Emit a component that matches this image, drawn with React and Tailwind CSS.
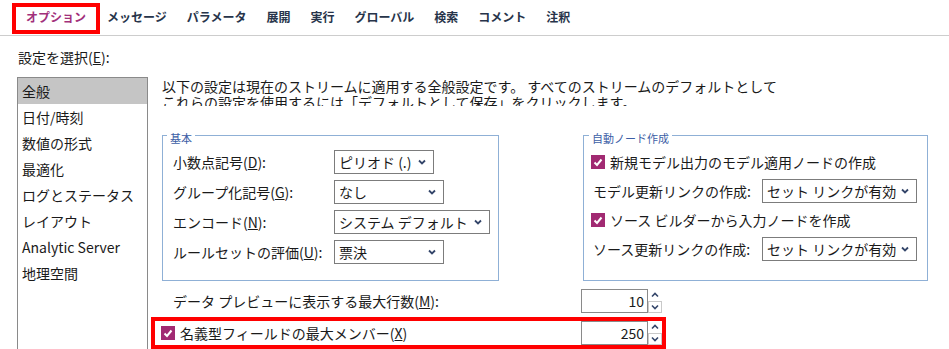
import React from "react";

const tabs = ["メッセージ", "パラメータ", "展開", "実行", "グローバル", "検索", "コメント", "注釈"];
const items = ["全般", "日付/時刻", "数値の形式", "最適化", "ログとステータス", "レイアウト", "Analytic Server", "地理空間"];

function Chevron() {
  return (
    <svg width="8" height="6" viewBox="0 0 8 6" className="shrink-0">
      <polyline points="1,1.5 4,4.5 7,1.5" fill="none" stroke="#34466a" strokeWidth="1.8" />
    </svg>
  );
}

function Select({ label, className }) {
  return (
    <div className={"flex items-center justify-between h-[24px] border border-[#7c7c7c] pl-[4px] pr-[7px] bg-white " + className}>
      <span className="text-[14px] leading-[16px] whitespace-nowrap">{label}</span>
      <Chevron />
    </div>
  );
}

function Check() {
  return (
    <div className="w-[14px] h-[14px] bg-[#a12a72] flex items-center justify-center shrink-0">
      <svg width="10" height="9" viewBox="0 0 10 9">
        <polyline points="1.5,4.5 4,7 8.5,1.5" fill="none" stroke="#fff" strokeWidth="2" />
      </svg>
    </div>
  );
}

function Spinner({ value }) {
  return (
    <div className="flex h-[24px] shrink-0">
      <div className="w-[67px] h-[24px] border border-[#8a8a8a] text-right pr-[3px] text-[14px] leading-[22px]">{value}</div>
      <div className="w-[14px] h-[24px] flex flex-col">
        <div className="h-[12px] flex items-center justify-center">
          <svg width="8" height="6" viewBox="0 0 8 6">
            <polyline points="1,4.5 4,1.5 7,4.5" fill="none" stroke="#34466a" strokeWidth="1.6" />
          </svg>
        </div>
        <div className="h-[12px] flex items-center justify-center border border-[#c9c9c9]">
          <svg width="8" height="6" viewBox="0 0 8 6">
            <polyline points="1,1.5 4,4.5 7,1.5" fill="none" stroke="#34466a" strokeWidth="1.6" />
          </svg>
        </div>
      </div>
    </div>
  );
}

export default function App() {
  return (
    <div className="w-[949px] h-[349px] overflow-hidden bg-white text-[#1a1a1a] font-['Noto_Sans_CJK_JP',sans-serif]">
      {/* tab bar */}
      <div className="flex items-start h-[36px] border-b border-[#cdcdcd]">
        <div className="ml-[12px] mt-[3px] w-[88px] h-[31px] border-4 border-[#ff0000] flex items-center justify-center pb-[3px] text-[12px] leading-[12px] font-bold text-[#a2307b]">
          オプション
        </div>
        <div className="flex gap-[20px] ml-[7px] mt-[11px] text-[12px] leading-[12px] font-bold text-[#27344a]">
          {tabs.map((t) => (
            <span key={t}>{t}</span>
          ))}
        </div>
      </div>

      <div className="pl-[18px] mt-[13px] text-[14px] leading-[16px]">
        設定を選択(<span className="underline">E</span>):
      </div>

      <div className="flex mt-[12px]">
        {/* category list */}
        <div className="ml-[17px] w-[131px] h-[300px] border border-[#8a8a8a] shrink-0">
          {items.map((it, idx) => (
            <div
              key={it}
              className={
                "h-[26px] pl-[4px] text-[14px] leading-[26px] whitespace-nowrap " +
                (idx === 0 ? "bg-[#c5c5c5]" : "")
              }
            >
              {it}
            </div>
          ))}
        </div>

        {/* right side */}
        <div className="ml-[14px] w-[770px]">
          <div className="h-[29px] overflow-hidden pt-[1px] text-[14px] leading-[16px] whitespace-nowrap">
            <div>以下の設定は現在のストリームに適用する全般設定です。 すべてのストリームのデフォルトとして</div>
            <div>これらの設定を使用するには「デフォルトとして保存」をクリックします。</div>
          </div>

          <div className="flex items-stretch mt-[20px]">
            <fieldset className="w-[337px] border border-[#8fb0d6] px-0 shrink-0">
              <legend className="ml-[4px] px-[3px] pt-[6px] text-[11px] leading-[12px] text-[#3c5ea6]">基本</legend>
              <div className="flex flex-col gap-[6px] pt-[6px] pb-[16px] pl-[10px] text-[14px] leading-[16px]">
                <div className="flex items-center h-[24px]">
                  <span className="w-[161px] shrink-0">小数点記号(<span className="underline">D</span>):</span>
                  <Select label="ピリオド (.)" className="w-[100px]" />
                </div>
                <div className="flex items-center h-[24px]">
                  <span className="w-[161px] shrink-0">グループ化記号(<span className="underline">G</span>):</span>
                  <Select label="なし" className="w-[110px]" />
                </div>
                <div className="flex items-center h-[24px]">
                  <span className="w-[161px] shrink-0">エンコード(<span className="underline">N</span>):</span>
                  <Select label="システム デフォルト" className="w-[156px]" />
                </div>
                <div className="flex items-center h-[24px]">
                  <span className="w-[161px] shrink-0 whitespace-nowrap">ルールセットの評価(<span className="underline">U</span>):</span>
                  <Select label="票決" className="w-[110px]" />
                </div>
              </div>
            </fieldset>

            <fieldset className="ml-[84px] w-[345px] border border-[#8fb0d6] px-0 shrink-0">
              <legend className="ml-[5px] px-[3px] pt-[6px] text-[11px] leading-[12px] text-[#3c5ea6]">自動ノード作成</legend>
              <div className="flex flex-col gap-[5px] pt-[6px] pb-[16px] pl-[7px] text-[14px] leading-[16px]">
                <div className="flex items-center gap-[5px] h-[24px]">
                  <Check />
                  <span className="whitespace-nowrap">新規モデル出力のモデル適用ノードの作成</span>
                </div>
                <div className="flex items-center h-[24px] pl-[2px]">
                  <span className="w-[169px] shrink-0 whitespace-nowrap">モデル更新リンクの作成:</span>
                  <Select label="セット リンクが有効" className="w-[155px]" />
                </div>
                <div className="flex items-center gap-[5px] h-[24px]">
                  <Check />
                  <span className="whitespace-nowrap">ソース ビルダーから入力ノードを作成</span>
                </div>
                <div className="flex items-center h-[24px] pl-[2px]">
                  <span className="w-[169px] shrink-0 whitespace-nowrap">ソース更新リンクの作成:</span>
                  <Select label="セット リンクが有効" className="w-[155px]" />
                </div>
              </div>
            </fieldset>
          </div>

          {/* bottom rows */}
          <div className="mt-[8px] text-[14px] leading-[16px]">
            <div className="flex items-center h-[24px] ml-[11px] w-[489px]">
              <span className="whitespace-nowrap">
                データ プレビューに表示する最大行数(<span className="underline">M</span>):
              </span>
              <div className="ml-auto">
                <Spinner value="10" />
              </div>
            </div>
            <div className="flex items-center -ml-[11px] mt-[4px] w-[515px] h-[32px] border-4 border-[#ff0000] pl-[6px]">
              <Check />
              <span className="ml-[5px] whitespace-nowrap">
                名義型フィールドの最大メンバー(<span className="underline">X</span>)
              </span>
              <div className="ml-auto">
                <Spinner value="250" />
              </div>
            </div>
          </div>
        </div>
      </div>
    </div>
  );
}
